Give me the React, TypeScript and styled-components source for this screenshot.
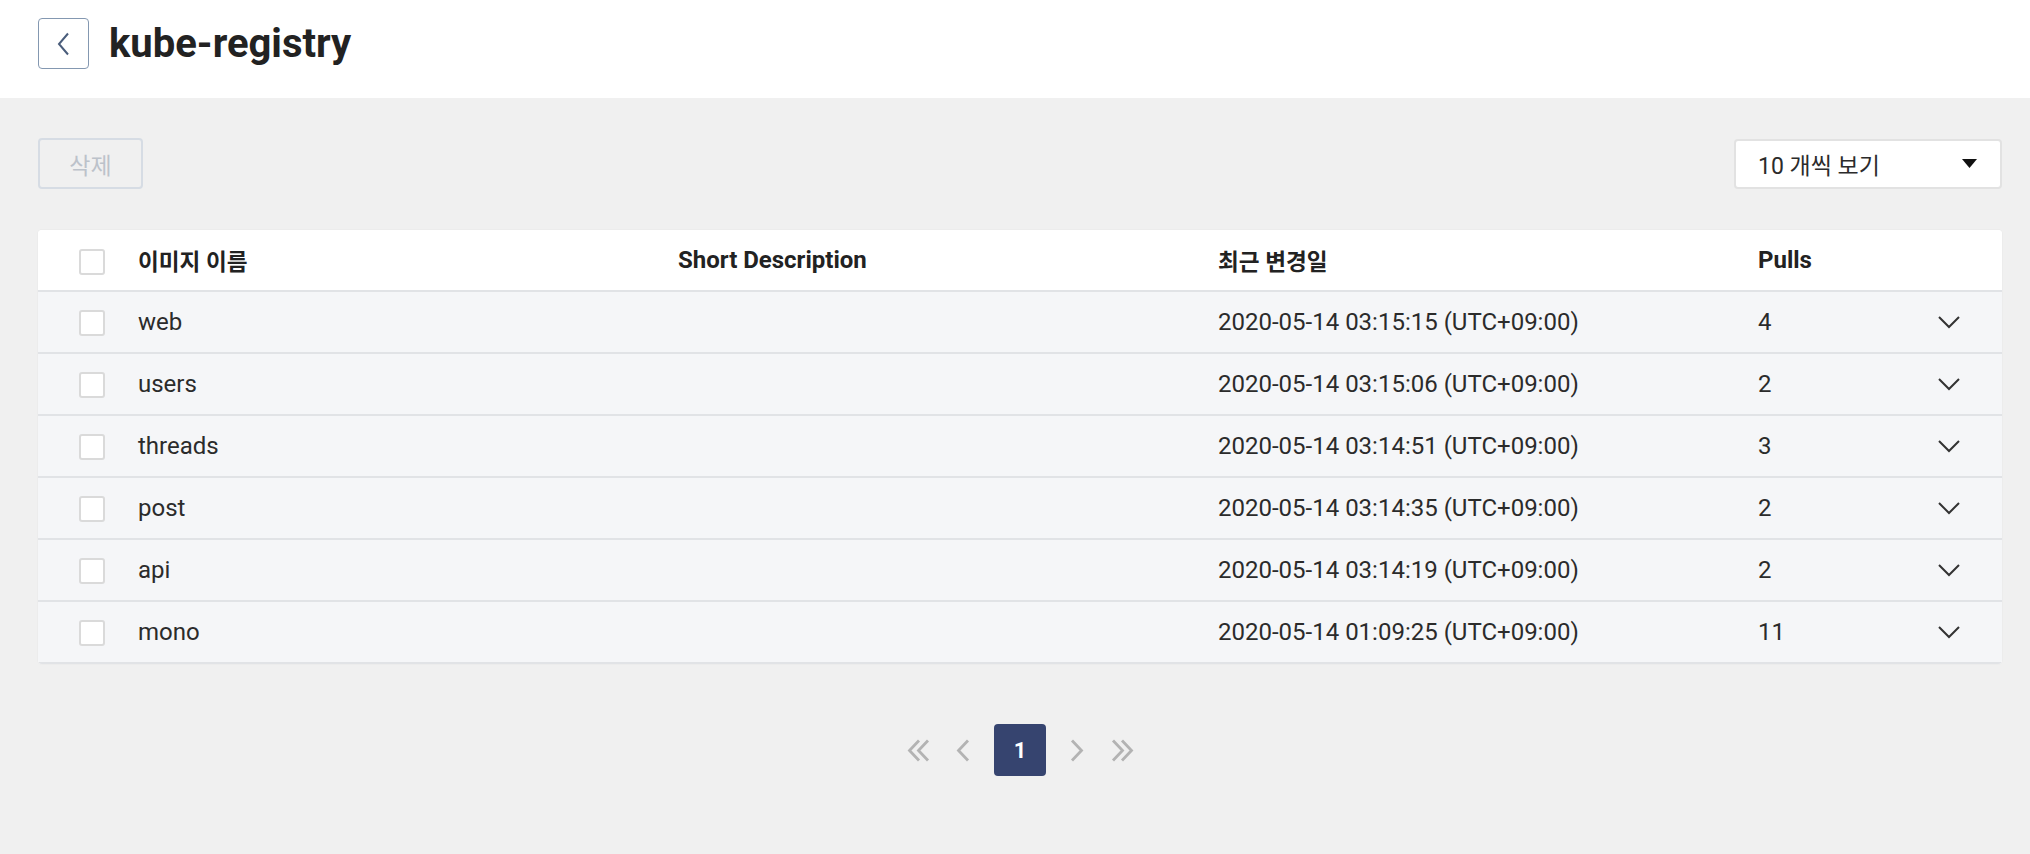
import React from "react";
import styled, { createGlobalStyle } from "styled-components";

const GlobalStyle = createGlobalStyle`
  html, body {
    margin: 0;
    padding: 0;
    background: #f0f0f0;
    font-family: Roboto, "Noto Sans CJK KR", "Noto Sans", sans-serif;
    color: #2b2b2b;
  }
  * { box-sizing: border-box; }
`;

const Page = styled.div`
  min-height: 100vh;
  background: #f0f0f0;
`;

const Header = styled.header`
  height: 98px;
  background: #ffffff;
  display: flex;
  align-items: flex-start;
  padding: 18px 28px 0 38px;
  gap: 20px;
`;

const BackButton = styled.button`
  width: 51px;
  height: 51px;
  flex: none;
  border: 1.5px solid #8498b1;
  border-radius: 4px;
  background: #ffffff;
  display: flex;
  align-items: center;
  justify-content: center;
  padding: 0;
  cursor: pointer;
`;

const Title = styled.h1`
  margin: 0;
  font-size: 40px;
  font-weight: 700;
  color: #222222;
  line-height: 51px;
`;

const Main = styled.main`
  padding: 40px 28px 40px 38px;
`;

const Toolbar = styled.div`
  display: flex;
  justify-content: space-between;
  align-items: center;
`;

const DeleteButton = styled.button`
  width: 105px;
  height: 51px;
  border: 2px solid #d6dce4;
  border-radius: 4px;
  background: transparent;
  color: #bcc2ca;
  font-family: inherit;
  font-size: 23px;
  padding: 0;
`;

const Select = styled.div`
  width: 268px;
  height: 50px;
  border: 2px solid #e2e2e2;
  border-radius: 4px;
  background: #ffffff;
  display: flex;
  align-items: center;
  justify-content: space-between;
  padding: 0 23px 0 22px;
  font-size: 23px;
  color: #2b2b2b;
`;

const Table = styled.div`
  margin-top: 41px;
  background: #ffffff;
  border-radius: 4px;
  overflow: hidden;
  box-shadow: 0 0 0 1px #ececec;
`;

const Row = styled.div<{ $head?: boolean }>`
  display: grid;
  grid-template-columns: 100px 540px 540px 540px 1fr;
  align-items: center;
  height: 62px;
  background: ${(p) => (p.$head ? "#ffffff" : "#f5f6f8")};
  border-bottom: 2px solid #e1e3e6;
  font-size: 24px;
  font-weight: ${(p) => (p.$head ? 700 : 400)};
  color: ${(p) => (p.$head ? "#222222" : "#2b2b2b")};
`;

const CheckCell = styled.div<{ $head?: boolean }>`
  padding-left: 41px;
  display: flex;
  align-items: center;
  padding-top: ${(p) => (p.$head ? "3px" : "1px")};
`;

const Checkbox = styled.span`
  display: block;
  width: 26px;
  height: 26px;
  border: 2px solid #dadada;
  border-radius: 3px;
  background: #ffffff;
`;

const Cell = styled.div<{ $ko?: boolean }>`
  white-space: nowrap;
  font-size: ${(p) => (p.$ko ? "22.6px" : "inherit")};
`;

const LastCell = styled.div`
  display: flex;
  align-items: center;
  justify-content: space-between;
  padding-right: 41px;
`;

const Pagination = styled.nav`
  display: flex;
  justify-content: center;
  align-items: center;
  gap: 20px;
  margin-top: 60px;
`;

const ArrowBox = styled.span<{ $w: number }>`
  width: ${(p) => p.$w}px;
  height: 52px;
  display: flex;
  align-items: center;
  justify-content: center;
`;

const PageButton = styled.span`
  width: 52px;
  height: 52px;
  border-radius: 4px;
  background: #36446f;
  color: #ffffff;
  font-size: 22px;
  font-weight: 700;
  display: flex;
  align-items: center;
  justify-content: center;
`;

const rows = [
  { name: "web", date: "2020-05-14 03:15:15 (UTC+09:00)", pulls: "4" },
  { name: "users", date: "2020-05-14 03:15:06 (UTC+09:00)", pulls: "2" },
  { name: "threads", date: "2020-05-14 03:14:51 (UTC+09:00)", pulls: "3" },
  { name: "post", date: "2020-05-14 03:14:35 (UTC+09:00)", pulls: "2" },
  { name: "api", date: "2020-05-14 03:14:19 (UTC+09:00)", pulls: "2" },
  { name: "mono", date: "2020-05-14 01:09:25 (UTC+09:00)", pulls: "11" },
];

const ChevronDown = () => (
  <svg width="24" height="14" viewBox="0 0 24 14" fill="none">
    <polyline points="2,2 12,12 22,2" stroke="#333" strokeWidth="2" />
  </svg>
);

const Single = ({ dir }: { dir: "l" | "r" }) => (
  <svg width="14" height="23" viewBox="0 0 14 23" fill="none">
    <polyline
      points={dir === "l" ? "12,1.5 2.5,11.5 12,21.5" : "2,1.5 11.5,11.5 2,21.5"}
      stroke="#b3b3b3"
      strokeWidth="2.8"
    />
  </svg>
);

const Double = ({ dir }: { dir: "l" | "r" }) => (
  <svg width="23" height="23" viewBox="0 0 23 23" fill="none">
    {dir === "l" ? (
      <>
        <polyline points="12,1.5 2.5,11.5 12,21.5" stroke="#b3b3b3" strokeWidth="2.8" />
        <polyline points="21,1.5 11.5,11.5 21,21.5" stroke="#b3b3b3" strokeWidth="2.8" />
      </>
    ) : (
      <>
        <polyline points="2,1.5 11.5,11.5 2,21.5" stroke="#b3b3b3" strokeWidth="2.8" />
        <polyline points="11,1.5 20.5,11.5 11,21.5" stroke="#b3b3b3" strokeWidth="2.8" />
      </>
    )}
  </svg>
);

export default function App() {
  return (
    <Page>
      <GlobalStyle />
      <Header>
        <BackButton aria-label="back">
          <svg width="13" height="24" viewBox="0 0 13 24" fill="none">
            <polyline points="11,1.5 2,12 11,22.5" stroke="#4a5d7b" strokeWidth="2" />
          </svg>
        </BackButton>
        <Title>kube-registry</Title>
      </Header>
      <Main>
        <Toolbar>
          <DeleteButton>삭제</DeleteButton>
          <Select>
            <span>10 개씩 보기</span>
            <svg width="15" height="9" viewBox="0 0 15 9">
              <polygon points="0,0 15,0 7.5,9" fill="#111" />
            </svg>
          </Select>
        </Toolbar>
        <Table>
          <Row $head>
            <CheckCell $head>
              <Checkbox />
            </CheckCell>
            <Cell $ko>이미지 이름</Cell>
            <Cell>Short Description</Cell>
            <Cell $ko>최근 변경일</Cell>
            <Cell>Pulls</Cell>
          </Row>
          {rows.map((r) => (
            <Row key={r.name}>
              <CheckCell>
                <Checkbox />
              </CheckCell>
              <Cell>{r.name}</Cell>
              <Cell />
              <Cell>{r.date}</Cell>
              <LastCell>
                <span>{r.pulls}</span>
                <ChevronDown />
              </LastCell>
            </Row>
          ))}
        </Table>
        <Pagination>
          <ArrowBox $w={28}>
            <Double dir="l" />
          </ArrowBox>
          <ArrowBox $w={22}>
            <Single dir="l" />
          </ArrowBox>
          <PageButton>1</PageButton>
          <ArrowBox $w={22}>
            <Single dir="r" />
          </ArrowBox>
          <ArrowBox $w={28}>
            <Double dir="r" />
          </ArrowBox>
        </Pagination>
      </Main>
    </Page>
  );
}
